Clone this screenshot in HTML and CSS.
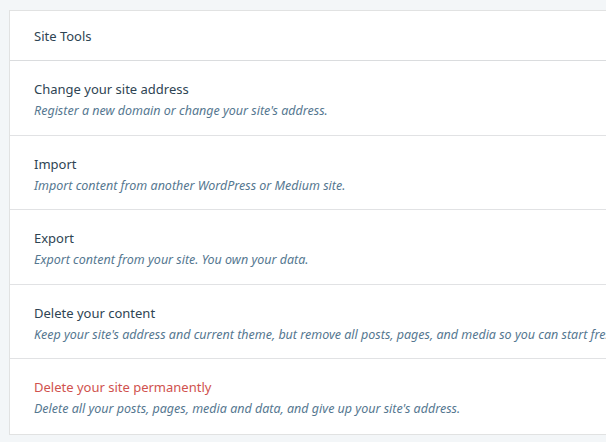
FILE: index.html
```html
<!DOCTYPE html>
<html>
<head>
<meta charset="utf-8">
<link rel="stylesheet" href="styles.css">
</head>
<body>
<div class="card">
  <div class="card-header">Site Tools</div>
  <div class="row">
    <div class="title">Change your site address</div>
    <div class="desc">Register a new domain or change your site's address.</div>
  </div>
  <div class="row">
    <div class="title">Import</div>
    <div class="desc">Import content from another WordPress or Medium site.</div>
  </div>
  <div class="row">
    <div class="title">Export</div>
    <div class="desc">Export content from your site. You own your data.</div>
  </div>
  <div class="row">
    <div class="title">Delete your content</div>
    <div class="desc">Keep your site's address and current theme, but remove all posts, pages, and media so you can start fresh.</div>
  </div>
  <div class="row">
    <div class="title danger">Delete your site permanently</div>
    <div class="desc">Delete all your posts, pages, media and data, and give up your site's address.</div>
  </div>
</div>
</body>
</html>
```
FILE: styles.css
```css
html, body {
  margin: 0;
  padding: 0;
  background: #f3f6f8;
  overflow: hidden;
}
body {
  padding: 10px 0 0 9px;
  font-family: "Noto Sans", "Open Sans", sans-serif;
  width: 597px;
}
.card {
  background: #fff;
  border: 1px solid #e1e2e2;
  border-right: none;
  overflow: hidden;
}
.card-header {
  height: 50px;
  box-sizing: border-box;
  padding: 1px 24px 0;
  display: flex;
  align-items: center;
  font-size: 13px;
  color: #2e4453;
  border-bottom: 1px solid #dadcde;
}
.row {
  height: 74.5px;
  box-sizing: border-box;
  padding: 17px 24px 0;
  border-bottom: 1px solid #e1e2e4;
  white-space: nowrap;
  overflow: hidden;
}
.row:last-child {
  border-bottom: none;
}
.title {
  font-size: 13px;
  line-height: 22px;
  color: #2e4453;
}
.title.danger {
  color: #d0524e;
}
.desc {
  font-size: 12.5px;
  line-height: 22px;
  font-style: italic;
  color: #557790;
}
```
